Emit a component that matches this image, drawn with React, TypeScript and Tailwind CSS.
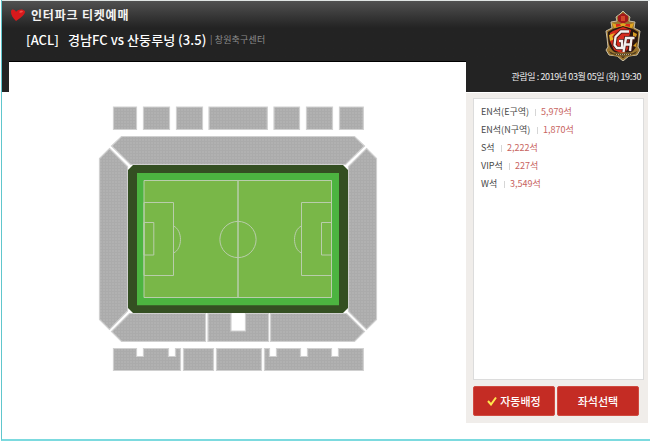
import { ReactNode } from "react";

const seats = [
  { name: "EN석(E구역)", count: "5,979석", width: "w-[49px]", countWidth: "w-[29px]" },
  { name: "EN석(N구역)", count: "1,870석", width: "w-[51px]", countWidth: "w-[29px]" },
  { name: "S석", count: "2,222석", width: "w-[15px]", countWidth: "w-[29px]" },
  { name: "VIP석", count: "227석", width: "w-[23px]", countWidth: "w-[22px]" },
  { name: "W석", count: "3,549석", width: "w-[18px]", countWidth: "w-[29px]" },
];

const blocks = [
  // top row
  "M113.5 107H136.5V129.5H113.5Z",
  "M143.5 107H169.5V129.5H143.5Z",
  "M176.5 107H202.5V129.5H176.5Z",
  "M209 107H267.3V129.5H209Z",
  "M274 107H299.5V129.5H274Z",
  "M306.5 107H332.5V129.5H306.5Z",
  "M339.5 107H363.3V129.5H339.5Z",
  // stands around the pitch
  "M121.5 136.5H354.5L364.5 146L345.5 164.5H130.5L111.5 146Z",
  "M109.5 148.5L127.5 166.5V311L109.5 329.5L99.5 319.5V158.5Z",
  "M366.5 148.5L376.5 158.5V319.5L366.5 329.5L348.5 311.5V166.5Z",
  "M129.5 313.5H205.5V341.5H121.5L111.5 331.5Z",
  "M208 313.5H231V331H245.5V313.5H268.5V341.5H208Z",
  "M270.5 313.5H346.5L364.5 331.5L354.5 341.5H270.5Z",
  // bottom row
  "M113.5 348.5H136.5V356.5H143.5V348.5H168.5V356.5H175.5V348.5H180.5V370.5H113.5Z",
  "M183.5 348.5H213.5V370.5H183.5Z",
  "M216.5 348.5H261.5V370.5H216.5Z",
  "M264.5 348.5H269.5V356.5H276.5V348.5H300.5V356.5H307.5V348.5H331.5V356.5H338.5V348.5H363.3V370.5H264.5Z",
];

const HeartIcon = () => (
  <svg className="w-4 h-[14px] shrink-0" viewBox="0 0 16 14">
    <path
      fill="#d8191c"
      d="M6 13C3 10 .8 7 1 3.5C1.3 1 4.2.8 6.1 3.8C8.5 1 13 .5 15 3.2C15.5 6 11 9.8 6 13Z"
    />
    <path fill="#f0504a" d="M9 4.2C10.5 2.5 12.5 2.5 13 3.5C12 4.8 10 5 9 4.2Z" />
  </svg>
);

const ClubEmblem = () => (
  <svg className="w-9 h-[53px]" viewBox="0 0 36 53">
    <path
      fill="#9b752e"
      stroke="#c9bea5"
      strokeWidth="1"
      d="M18 1L21 4L25 7L24 11L30 12L29 18L35 21L34 28L33 37L35 40L32 45L24 46L18 51L12 46L4 45L1 40L3 37L2 28L1 21L7 18L6 12L12 11L11 7L15 4Z"
    />
    <path fill="#2b1710" d="M8 19L18 16L28 19L33 22C33 30 33 36 28 41L18 48L8 41C3 36 3 30 3 22Z" />
    <path fill="#d52b1e" d="M8 21L18 17L26 20L24 27L23 39L18 44L9 40L5 31L5 23Z" />
    <path fill="#a3181b" d="M13 6L18 3L23 6L23 11L18 14L13 11Z" />
    <path fill="#d24628" d="M16 6H20V11H16Z" />
    <path fill="#e3a61f" d="M7 13L13 15L18 13L23 15L29 13L27 18L18 16L9 18Z" />
    <path fill="#d9261c" d="M11 14L15 14L16 16L11 17ZM21 14L25 14L25 17L20 16Z" />
    <path fill="#e7af25" d="M4 25L10 23L7 27L10 29L5 31Z" />
    <path fill="#d69a22" d="M28 22L32 24L31 27L28 26ZM28 36L32 32L31 37Z" />
    <g fill="none" strokeLinejoin="miter">
      <path
        stroke="#4a1713"
        strokeWidth="4"
        d="M24 21.5H16L10.5 27L9.5 35L12 38H17V31H14M29.5 28H21L18.5 42M19 34.5H27M26.5 28L25 41"
      />
      <path
        stroke="#f2f0ed"
        strokeWidth="2.3"
        d="M24 21.5H16L10.5 27L9.5 35L12 38H17V31H14M29.5 28H21L18.5 42M19 34.5H27M26.5 28L25 41"
      />
    </g>
    <path fill="#4f3b1e" stroke="#a07a32" d="M3 40L9 43H27L33 40L31 44L24 46H12L5 44Z" />
    <path stroke="#b3a88e" strokeDasharray="1 1" d="M11 44.5H26" />
  </svg>
);

const StadiumMap = () => (
  <svg className="block w-[457px] h-[360px]" viewBox="9 62 457 360">
    <defs>
      <pattern id="seat" width="3" height="3" patternUnits="userSpaceOnUse">
        <rect width="3" height="3" fill="#b1b1b1" />
        <path d="M0 .5H3M.5 0V3" stroke="#ababab" />
      </pattern>
    </defs>
    <g fill="url(#seat)" stroke="#d0d0d0" strokeWidth="1.2">
      {blocks.map((d) => (
        <path key={d} d={d} />
      ))}
    </g>
    <path fill="#344f22" d="M133 165H343L348 170V308L343 313H133L128 308V170Z" />
    <path fill="#4cb440" d="M137 173H339V305.3H137Z" />
    <path fill="#79b748" d="M144 180H332V298H144Z" />
    <g fill="none" stroke="#b9cdab" strokeWidth="1">
      <path d="M144 180.5H331.5V297.5H144Z" />
      <path strokeWidth="1.5" d="M238 180V298" />
      <circle cx="238" cy="239.5" r="18.1" />
      <path d="M144 202.5H173.5V275.5H144ZM144 222.5H153.8V255H144ZM173.5 226C182.8 230 182.8 249 173.5 253" />
      <path d="M331.5 202.5H301.5V275.5H331.5ZM331.5 222.5H321.5V255H331.5ZM301.5 226C292.2 230 292.2 249 301.5 253" />
    </g>
  </svg>
);

const Fit = ({ children, className, size }: { children: ReactNode; className: string; size: string }) => (
  <span className={`block whitespace-nowrap shrink-0 ${className} ${size}`}>{children}</span>
);

const RedButton = ({ children }: { children: ReactNode }) => (
  <button className="flex h-[30px] w-[82px] items-center justify-center rounded-xs border border-[#d04a40] bg-[#c42c24] text-[11px] font-medium text-white">
    {children}
  </button>
);

export default function App() {
  return (
    <main className="h-[441px] w-[650px] overflow-hidden bg-white pl-px font-['Noto_Sans_CJK_KR',sans-serif]">
      <div className="h-[441px] w-[649px] border-b-2 border-l border-b-[#7cdadf] border-l-[#60c6cd]">
        <div className="h-px bg-[#dfe4e3]" />
        <header className="flex h-[60px] w-[646px] justify-between bg-linear-to-b from-[#515151] to-[#232323] to-45%">
          <div>
            <div className="mt-[6px] flex h-[15px] items-center pl-[8px]">
              <HeartIcon />
              <h1 className="ml-[5px] whitespace-nowrap text-[12px] leading-[15px] font-bold tracking-[0.8px] text-[#f3f3f3]">
                인터파크 티켓예매
              </h1>
            </div>
            <div className="mt-[9px] flex h-[18px] items-center pl-[24px] whitespace-nowrap text-white">
              <Fit className="text-[13px] font-medium" size="w-[42px]">[ACL]</Fit>
              <Fit className="text-[13px] font-medium tracking-[0.05px]" size="w-[142px]">경남FC vs 산둥루넝 (3.5)</Fit>
              <span className="text-[9px] tracking-[0.15px] text-[#8c8c8c]">| 창원축구센터</span>
            </div>
          </div>
          <div className="mt-[9px] mr-[7px] h-[50px]">
            <ClubEmblem />
          </div>
        </header>
        <div className="flex w-[646px]">
          <div className="h-[31px] w-[7px] bg-[#232323]" />
          <section className="w-[457px] border-t border-black">
            <StadiumMap />
          </section>
          <aside className="w-[182px]">
            <div className="flex h-[31px] items-center justify-end bg-[#232323] pr-[7px] text-[9px] tracking-[-0.4px] whitespace-nowrap text-[#eeeeee]">
              관람일 : 2019년 03월 05일 (화) 19:30
            </div>
            <div className="mt-px h-[330px] bg-[#f0edea] px-[7px] pt-[5px]">
              <ul className="h-[282px] w-[171px] border border-[#dcdcdc] bg-white pt-[4px] pl-[7px]">
                {seats.map((seat) => (
                  <li key={seat.name} className="flex h-[18px] items-center text-[9px] text-[#484848]">
                    <Fit className="" size={seat.width}>{seat.name}</Fit>
                    <span className="mx-[5px] h-[7px] w-px bg-[#d6d6d6]" />
                    <Fit className="text-[#c86461]" size={seat.countWidth}>{seat.count}</Fit>
                  </li>
                ))}
              </ul>
              <div className="mt-[6px] flex gap-[2px]">
                <RedButton>
                  <svg className="mr-[3px] h-[10px] w-[10px]" viewBox="0 0 10 10">
                    <path d="M1 5L4 8.5L9 1.5" fill="none" stroke="#ffe94e" strokeWidth="2" />
                  </svg>
                  자동배정
                </RedButton>
                <RedButton>좌석선택</RedButton>
              </div>
            </div>
          </aside>
        </div>
      </div>
    </main>
  );
}
